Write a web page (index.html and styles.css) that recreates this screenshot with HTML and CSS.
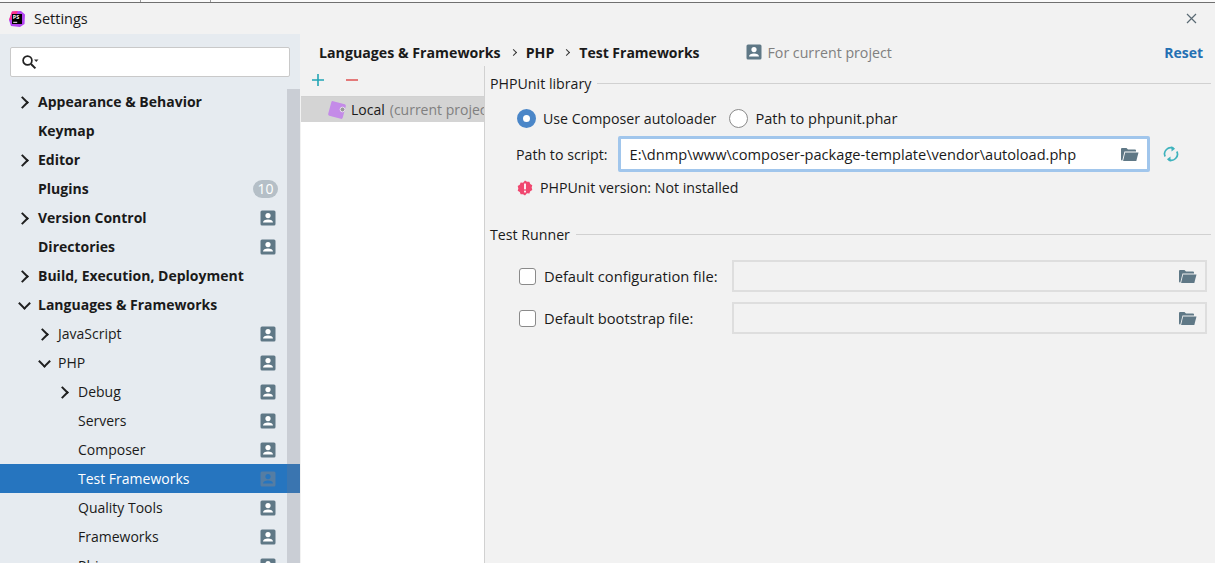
FILE: index.html
```html
<!DOCTYPE html>
<html>
  <head>
    <title>Settings</title>
    <link rel="stylesheet" href="styles.css">
  </head>
  <body>
    <svg width="0" height="0" class="defs">
      <symbol id="shared" viewBox="0 0 16 16">
        <rect x="0.5" y="0.5" width="15" height="15" rx="1.5" fill="#5f7886"/>
        <circle cx="8" cy="5.6" r="2.6" fill="#fff"/>
        <path d="M3 12.6c0-2 2.2-3 5-3s5 1 5 3z" fill="#fff"/>
      </symbol>
      <symbol id="shared-dim" viewBox="0 0 16 16">
        <rect x="0.5" y="0.5" width="15" height="15" rx="1.5" fill="#557da3"/>
        <circle cx="8" cy="5.6" r="2.6" fill="#2675bf"/>
        <path d="M3 12.6c0-2 2.2-3 5-3s5 1 5 3z" fill="#2675bf"/>
      </symbol>
      <symbol id="folder" viewBox="0 0 18 15">
        <path d="M0.5 2a1 1 0 0 1 1-1h4.5l1.5 1.5h7a1 1 0 0 1 1 1v1H4L1.8 13.5H1.5a1 1 0 0 1-1-1z" fill="#5f7886"/>
        <path d="M4.6 5.6H18l-2.2 8.4H2.6z" fill="#5f7886"/>
      </symbol>
    </svg>

    <div class="topstrip"><i class="tab"></i></div>

    <header class="titlebar">
      <svg class="logo" width="16" height="16" viewBox="0 0 16 16">
        <path d="M3 0.5 12 0 16 3.5 15.5 13 11 16 2 15 0 9z" fill="#b345f1"/>
        <path d="M3 0.5 9 0 5 8 0 9z" fill="#ff318c"/>
        <rect x="3" y="3" width="10" height="10" fill="#000"/>
        <rect x="4.2" y="10.8" width="4" height="1" fill="#fff"/>
        <text x="3.8" y="8.4" class="logo-text">PS</text>
      </svg>
      <span class="title">Settings</span>
      <svg class="close" width="11" height="11" viewBox="0 0 11 11">
        <path d="M1 1l9 9M10 1l-9 9" stroke="#5a6a74" stroke-width="1.2" fill="none"/>
      </svg>
    </header>

    <div class="window">
      <aside class="sidebar">
        <div class="search-wrap">
          <div class="search">
            <svg width="19" height="16" viewBox="0 0 19 16">
              <circle cx="6.5" cy="6.5" r="4.4" fill="none" stroke="#222" stroke-width="1.7"/>
              <path d="M10 10l4.4 4.4" stroke="#222" stroke-width="2"/>
              <path d="M13 5.5h4.5l-2.25 2.5z" fill="#333"/>
            </svg>
          </div>
        </div>
        <div class="tree-area">
          <ul class="tree">
            <li class="row bold"><i class="arrow right"></i>Appearance &amp; Behavior</li>
            <li class="row bold"><i class="arrow none"></i>Keymap</li>
            <li class="row bold"><i class="arrow right"></i>Editor</li>
            <li class="row bold"><i class="arrow none"></i>Plugins<span class="badge">10</span></li>
            <li class="row bold"><i class="arrow right"></i>Version Control<svg class="share"><use href="#shared"/></svg></li>
            <li class="row bold"><i class="arrow none"></i>Directories<svg class="share"><use href="#shared"/></svg></li>
            <li class="row bold"><i class="arrow right"></i>Build, Execution, Deployment</li>
            <li class="row bold"><i class="arrow down"></i>Languages &amp; Frameworks</li>
            <li class="row lvl1"><i class="arrow right"></i>JavaScript<svg class="share"><use href="#shared"/></svg></li>
            <li class="row lvl1"><i class="arrow down"></i>PHP<svg class="share"><use href="#shared"/></svg></li>
            <li class="row lvl2"><i class="arrow right"></i>Debug<svg class="share"><use href="#shared"/></svg></li>
            <li class="row lvl2"><i class="arrow none"></i>Servers<svg class="share"><use href="#shared"/></svg></li>
            <li class="row lvl2"><i class="arrow none"></i>Composer<svg class="share"><use href="#shared"/></svg></li>
            <li class="row lvl2 selected"><i class="arrow none"></i>Test Frameworks<svg class="share"><use href="#shared-dim"/></svg></li>
            <li class="row lvl2"><i class="arrow none"></i>Quality Tools<svg class="share"><use href="#shared"/></svg></li>
            <li class="row lvl2"><i class="arrow none"></i>Frameworks<svg class="share"><use href="#shared"/></svg></li>
            <li class="row lvl2"><i class="arrow none"></i>Phing<svg class="share"><use href="#shared"/></svg></li>
          </ul>
          <div class="scrollbar"></div>
        </div>
      </aside>

      <main class="content">
        <div class="crumbs">
          <span class="crumb">Languages &amp; Frameworks</span>
          <i class="crumb-sep"></i>
          <span class="crumb">PHP</span>
          <i class="crumb-sep"></i>
          <span class="crumb last">Test Frameworks</span>
          <svg class="share project-icon"><use href="#shared"/></svg>
          <span class="project">For current project</span>
          <a class="reset">Reset</a>
        </div>

        <div class="panels">
          <section class="list-panel">
            <div class="list-tools">
              <svg width="12" height="12" viewBox="0 0 12 12"><path d="M6 0v12M0 6h12" stroke="#22a5b5" stroke-width="1.6"/></svg>
              <svg width="12" height="12" viewBox="0 0 12 12"><path d="M0 6h12" stroke="#e05c5c" stroke-width="1.6"/></svg>
            </div>
            <div class="list-body">
              <div class="list-row">
                <svg class="local-icon" width="20" height="20" viewBox="0 0 20 20">
                  <rect x="2.5" y="2.5" width="15" height="15" rx="1.5" transform="rotate(15 10 10)" fill="#c48be8"/>
                  <circle cx="15.5" cy="9.5" r="2.4" fill="#9a9a9a" stroke="#e8e0ee" stroke-width="1"/>
                </svg>
                <span class="local-name">Local</span><span class="local-note">(current project)</span>
              </div>
            </div>
          </section>

          <section class="form-panel">
            <div class="group-title"><span>PHPUnit library</span><i></i></div>
            <div class="radios">
              <label class="radio"><i class="dot on"></i>Use Composer autoloader</label>
              <label class="radio wide"><i class="dot"></i>Path to phpunit.phar</label>
            </div>
            <div class="script-row">
              <span>Path to script:</span>
              <div class="path-input">
                <span>E:\dnmp\www\composer-package-template\vendor\autoload.php</span>
                <svg class="folder"><use href="#folder"/></svg>
              </div>
              <svg class="refresh" width="16" height="18" viewBox="0 0 16 18">
                <path d="M2.2 11.5A6 6 0 0 1 10.5 3.6M13.8 6.5A6 6 0 0 1 5.5 14.4" fill="none" stroke="#3fb3bd" stroke-width="1.7"/>
                <path d="M8.5 1v5.4l3.6-2.7zM7.5 17v-5.4l-3.6 2.7z" fill="#3fb3bd"/>
              </svg>
            </div>
            <div class="status">
              <svg width="16" height="16" viewBox="0 0 18 18">
                <path d="M9 0.5l2.2 1.6 2.7-.2 1 2.5 2.3 1.4-.7 2.7.7 2.7-2.3 1.4-1 2.5-2.7-.2L9 17.5l-2.2-1.6-2.7.2-1-2.5-2.3-1.4.7-2.7-.7-2.7 2.3-1.4 1-2.5 2.7.2z" fill="#f0476f"/>
                <rect x="8" y="4" width="2" height="6.5" fill="#fff"/>
                <rect x="8" y="12" width="2" height="2" fill="#fff"/>
              </svg>
              <span>PHPUnit version: Not installed</span>
            </div>

            <div class="group-title runner"><span>Test Runner</span><i></i></div>
            <div class="file-row">
              <label class="check"><i class="box"></i>Default configuration file:</label>
              <div class="file-input"><svg class="folder"><use href="#folder"/></svg></div>
            </div>
            <div class="file-row">
              <label class="check"><i class="box"></i>Default bootstrap file:</label>
              <div class="file-input"><svg class="folder"><use href="#folder"/></svg></div>
            </div>
          </section>
        </div>
      </main>
    </div>
  </body>
</html>
```

FILE: styles.css
```css
* {
  margin: 0;
  padding: 0;
  box-sizing: border-box;
}

html,
body {
  height: 563px;
  overflow: hidden;
}

body {
  display: flex;
  flex-direction: column;
  background-color: #f2f2f2;
  color: #1a1a1a;
  font-family: "Open Sans", "Noto Sans", sans-serif;
  font-size: 14px;
}

i {
  display: block;
  font-style: normal;
}

.defs {
  position: absolute;
}

.topstrip {
  height: 3px;
  flex: none;
  padding-left: 140px;
  background-color: #fafafa;
  border-bottom: 1px solid #707070;
}

.tab {
  width: 71px;
  height: 2px;
  border-left: 1px solid #9a9a9a;
  border-right: 1px solid #9a9a9a;
}

.titlebar {
  height: 31px;
  flex: none;
  display: flex;
  align-items: center;
  padding: 0 18px 0 9px;
}

.logo {
  margin-right: 9px;
}

.logo-text {
  font-size: 5.5px;
  font-weight: 700;
  fill: #fff;
}

.title {
  font-size: 14.5px;
}

.close {
  margin-left: auto;
}

.window {
  flex: 1;
  display: flex;
  min-height: 0;
}

/* left tree */
.sidebar {
  width: 301px;
  flex: none;
  display: flex;
  flex-direction: column;
  background-color: #e6ebf0;
  border-right: 1px solid #f2f2f2;
}

.search-wrap {
  height: 55px;
  flex: none;
  padding: 13px 10px 0;
}

.search {
  height: 30px;
  display: flex;
  align-items: center;
  padding-left: 10px;
  background-color: #fff;
  border: 1px solid #c9c9c9;
  border-radius: 2px;
}

.tree-area {
  position: relative;
  flex: 1;
  overflow: hidden;
}

.scrollbar {
  position: absolute;
  top: 0;
  right: 0;
  bottom: 0;
  width: 13px;
  background-color: rgba(120, 120, 130, 0.25);
}

.tree {
  list-style-type: none;
  margin-top: -2px;
}

.row {
  height: 29px;
  display: flex;
  align-items: center;
  padding: 0 24px 0 19px;
  white-space: nowrap;
}

.bold {
  font-weight: 700;
}

.lvl1 {
  padding-left: 39px;
}

.lvl2 {
  padding-left: 59px;
}

.arrow {
  width: 19px;
  height: 12px;
  flex: none;
  position: relative;
}

.arrow.right::before,
.arrow.down::before {
  content: "";
  position: absolute;
  width: 7px;
  height: 7px;
  border-top: 2px solid #1f1f1f;
  border-right: 2px solid #1f1f1f;
}

.arrow.right::before {
  left: -1px;
  top: 2px;
  transform: rotate(45deg);
}

.arrow.down::before {
  left: 1px;
  top: 0;
  transform: rotate(135deg);
}

.selected {
  background-color: #2675bf;
  color: #fff;
}

.share {
  width: 16px;
  height: 16px;
  margin-left: auto;
  flex: none;
}

.badge {
  margin-left: auto;
  margin-right: -2px;
  width: 25px;
  height: 18px;
  border-radius: 9px;
  background-color: #b5bfc7;
  color: #fff;
  font-size: 14px;
  font-weight: 400;
  line-height: 18px;
  text-align: center;
}

/* right side */
.content {
  flex: 1;
  min-width: 0;
  display: flex;
  flex-direction: column;
}

.crumbs {
  height: 32px;
  flex: none;
  display: flex;
  align-items: center;
  padding: 4px 12px 0 18px;
  white-space: nowrap;
}

.crumb {
  font-size: 14.2px;
  font-weight: 700;
}

.crumb.last {
  font-size: 14px;
}

.crumb-sep {
  width: 5px;
  height: 5px;
  margin: 0 10px;
  border-top: 1.5px solid #333;
  border-right: 1.5px solid #333;
  transform: rotate(45deg);
}

.project-icon {
  margin-left: 46px;
  margin-right: 6px;
}

.project {
  font-size: 14.2px;
  color: #808080;
}

.reset {
  margin-left: auto;
  color: #2470b3;
  font-weight: 700;
}

.panels {
  flex: 1;
  display: flex;
  min-height: 0;
}

.list-panel {
  width: 184px;
  flex: none;
  display: flex;
  flex-direction: column;
  border-right: 1px solid #d1d1d1;
}

.list-tools {
  height: 31px;
  flex: none;
  display: flex;
  align-items: center;
  gap: 22px;
  padding: 0 0 2px 11px;
  border-bottom: 1px solid #d1d1d1;
}

.list-body {
  flex: 1;
  background-color: #fff;
  overflow: hidden;
}

.list-row {
  height: 25px;
  display: flex;
  align-items: center;
  padding-left: 26px;
  background-color: #d4d4d4;
  white-space: nowrap;
}

.local-icon {
  margin-right: 4px;
  flex: none;
}

.local-note {
  color: #808080;
  margin-left: 5px;
}

.form-panel {
  flex: 1;
  min-width: 0;
  padding: 7px 4px 0 5px;
  font-size: 14.2px;
}

.group-title {
  height: 20px;
  display: flex;
  align-items: center;
  gap: 6px;
}

.group-title i {
  flex: 1;
  height: 1px;
  background-color: #d1d1d1;
}

.runner {
  margin-top: 27px;
}

.radios {
  display: flex;
  gap: 13px;
  margin-top: 15px;
  padding-left: 27px;
}

.radio {
  display: flex;
  align-items: center;
  gap: 7px;
}

.radio.wide {
  font-size: 14.6px;
}

.dot {
  width: 19px;
  height: 19px;
  background-color: #fff;
  border: 1px solid #8a8a8a;
  border-radius: 50%;
}

.dot.on {
  border: 6px solid #4a86c8;
}

.script-row {
  display: flex;
  align-items: center;
  margin-top: 8px;
  padding-left: 26px;
}

.path-input {
  width: 532px;
  height: 36px;
  display: flex;
  align-items: center;
  justify-content: space-between;
  margin-left: 10px;
  padding: 0 8px 0 9px;
  background-color: #fff;
  border: 3px solid #a1c6ec;
  border-radius: 2px;
  font-size: 14.6px;
  white-space: nowrap;
}

.folder {
  width: 19px;
  height: 15px;
  flex: none;
}

.refresh {
  margin-left: 13px;
}

.status {
  display: flex;
  align-items: center;
  gap: 7px;
  margin-top: 6px;
  padding-left: 27px;
}

.file-row {
  display: flex;
  align-items: center;
  margin-right: 4px;
  margin-bottom: 10px;
  padding-left: 29px;
}

.group-title.runner + .file-row {
  margin-top: 16px;
}

.check {
  width: 213px;
  flex: none;
  display: flex;
  align-items: center;
  gap: 8px;
  font-size: 14.7px;
  white-space: nowrap;
}

.box {
  width: 17px;
  height: 17px;
  background-color: #fff;
  border: 1px solid #8a8a8a;
  border-radius: 3px;
}

.file-input {
  flex: 1;
  height: 32px;
  display: flex;
  align-items: center;
  justify-content: flex-end;
  padding-right: 8px;
  border: 2px solid #dedede;
}
```
